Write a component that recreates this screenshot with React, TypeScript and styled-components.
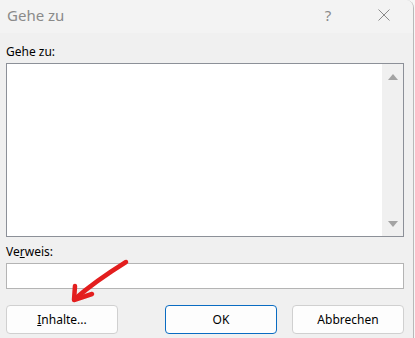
import React from "react";
import styled, { createGlobalStyle } from "styled-components";

const GlobalStyle = createGlobalStyle`
  html, body {
    margin: 0;
    padding: 0;
    background: #f6f6f6;
  }
  body {
    font-family: "Noto Sans", "Open Sans", sans-serif;
    overflow: hidden;
  }
`;

const Window = styled.div`
  position: relative;
  width: 413px;
  height: 338px;
  background: #f0f0f0;
  border-right: 1px solid #b9b9b9;
  border-top-right-radius: 8px;
  display: flex;
  flex-direction: column;
  overflow: hidden;
`;

const TitleBar = styled.div`
  height: 33px;
  display: flex;
  align-items: center;
  padding-left: 7px;
  padding-right: 6px;
  background: #f3f3f3;
`;

const Title = styled.div`
  flex: 1;
  font-size: 15px;
  color: #8a8a8a;
  margin-top: -4px;
`;

const TitleButton = styled.div<{ $w: number; $gap?: number }>`
  width: ${(p) => p.$w}px;
  margin-right: ${(p) => p.$gap ?? 0}px;
  height: 33px;
  display: flex;
  align-items: center;
  justify-content: center;
  color: #8a8a8a;
  font-size: 15px;
  margin-top: -4px;
`;

const Body = styled.div`
  display: flex;
  flex-direction: column;
  padding: 11px 9px 0 6px;
`;

const Label = styled.div<{ $top?: number }>`
  font-size: 12px;
  line-height: 16px;
  color: #000;
  margin-top: ${(p) => p.$top ?? 0}px;
  margin-bottom: 3px;
`;

const ListBox = styled.div`
  height: 172px;
  border: 1px solid #8c9098;
  background: #fff;
  display: flex;
  justify-content: flex-end;
`;

const ScrollBar = styled.div`
  width: 21px;
  background: #f0f0f0;
  display: flex;
  flex-direction: column;
  justify-content: space-between;
  align-items: center;
  padding: 10px 0 9px;
`;

const Arrow = styled.div<{ $down?: boolean }>`
  width: 0;
  height: 0;
  border-left: 5px solid transparent;
  border-right: 5px solid transparent;
  ${(p) =>
    p.$down
      ? "border-top: 6px solid #a3a3a3;"
      : "border-bottom: 6px solid #a3a3a3;"}
`;

const Input = styled.div`
  height: 24px;
  border: 1px solid #b4b4b4;
  background: #fff;
`;

const ButtonRow = styled.div`
  display: flex;
  margin-top: 16px;
`;

const Button = styled.div<{ $primary?: boolean; $left?: number }>`
  width: 110px;
  height: 27px;
  margin-left: ${(p) => p.$left ?? 0}px;
  border: 1px solid ${(p) => (p.$primary ? "#0a6cc2" : "#d0d0d0")};
  border-radius: 4px;
  background: #fdfdfd;
  display: flex;
  align-items: center;
  justify-content: center;
  font-size: 12px;
  color: #000;
`;

const RedArrow = styled.svg`
  position: absolute;
  left: 0;
  top: 0;
  pointer-events: none;
`;

export default function App() {
  return (
    <>
      <GlobalStyle />
      <Window>
        <TitleBar>
          <Title>Gehe zu</Title>
          <TitleButton $w={30} $gap={18}>?</TitleButton>
          <TitleButton $w={46}>
            <svg width="12" height="12" viewBox="0 0 12 12">
              <path d="M0.5 0.5 L11.5 11.5 M11.5 0.5 L0.5 11.5" stroke="#8a8a8a" strokeWidth="1" />
            </svg>
          </TitleButton>
        </TitleBar>
        <Body>
          <Label>Gehe zu:</Label>
          <ListBox>
            <ScrollBar>
              <Arrow />
              <Arrow $down />
            </ScrollBar>
          </ListBox>
          <Label $top={7}>
            Ve<u>r</u>weis:
          </Label>
          <Input />
          <ButtonRow>
            <Button>
              <span>
                <u>I</u>nhalte...
              </span>
            </Button>
            <Button $primary $left={47}>OK</Button>
            <Button $left={15}>Abbrechen</Button>
          </ButtonRow>
        </Body>
        <RedArrow width="415" height="338">
          <g stroke="#e31e1e" strokeWidth="4.5" strokeLinecap="round" strokeLinejoin="round" fill="none">
            <path d="M126 262 C110 272 92 284 76 298" />
            <path d="M75 286 L74 300 L92 294" />
          </g>
        </RedArrow>
      </Window>
    </>
  );
}
